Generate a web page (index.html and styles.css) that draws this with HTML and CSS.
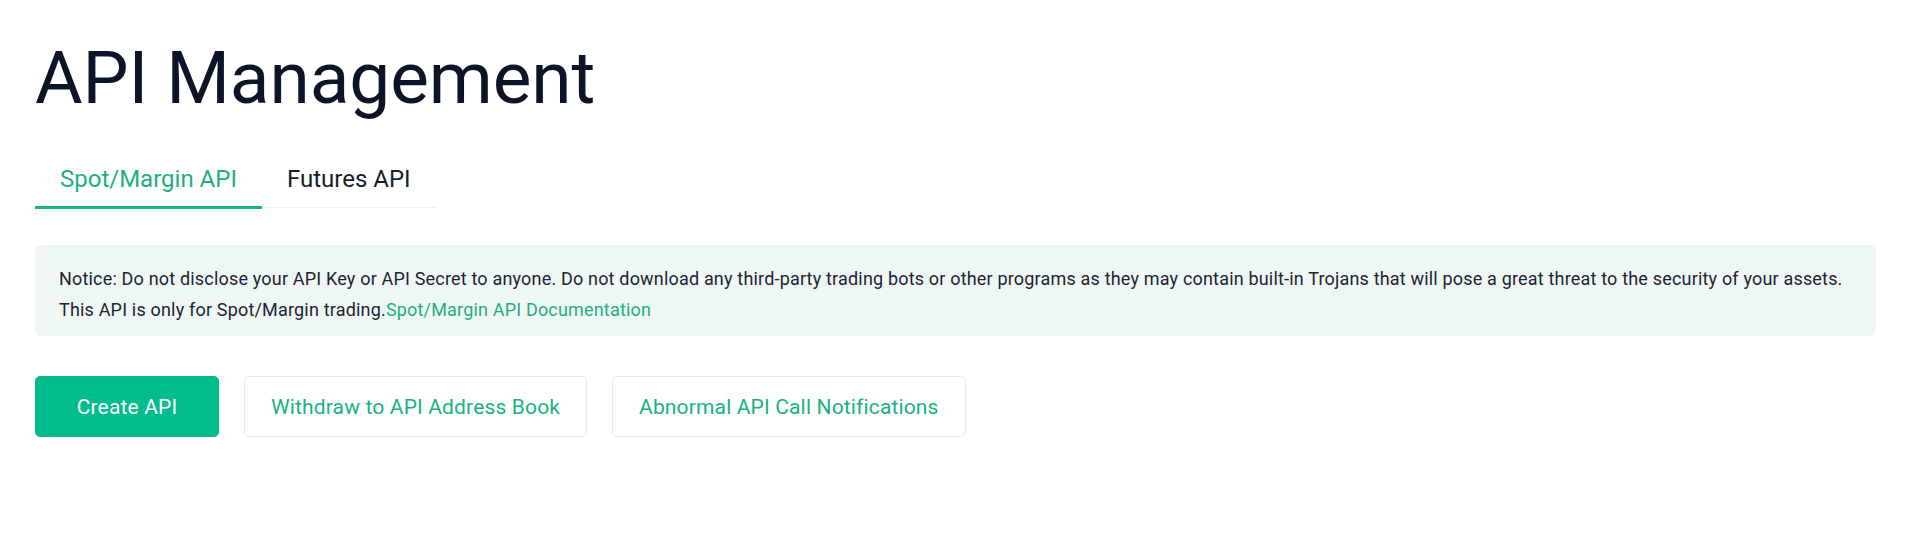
FILE: index.html
```html
<!DOCTYPE html>
<html lang="en">
<head>
<meta charset="utf-8">
<title>API Management</title>
<link rel="stylesheet" href="styles.css">
</head>
<body>
<main class="page">
  <h1 class="title">API Management</h1>
  <nav class="tabs">
    <a class="tab tab-active">Spot/Margin API</a>
    <a class="tab">Futures API</a>
  </nav>
  <div class="notice">
    <p class="notice-text">Notice: Do not disclose your API Key or API Secret to anyone. Do not download any third-party trading bots or other programs as they may contain built-in Trojans that will pose a great threat to the security of your assets.</p>
    <p class="notice-text">This API is only for Spot/Margin trading.<a class="notice-link">Spot/Margin API Documentation</a></p>
  </div>
  <div class="actions">
    <button class="btn btn-primary">Create API</button>
    <button class="btn btn-outline">Withdraw to API Address Book</button>
    <button class="btn btn-outline">Abnormal API Call Notifications</button>
  </div>
</main>
</body>
</html>
```
FILE: styles.css
```css
html, body {
  margin: 0;
  padding: 0;
  background: #ffffff;
}
body {
  font-family: Roboto, "Liberation Sans", sans-serif;
  color: #0c1628;
}
.page {
  padding: 38px 44px 0 35px;
  display: flex;
  flex-direction: column;
  align-items: flex-start;
}
.title {
  margin: 0;
  font-size: 73px;
  line-height: 80px;
  font-weight: 400;
  color: #0b1527;
  letter-spacing: -0.1px;
}
.tabs {
  margin-top: 45px;
  display: flex;
  border-bottom: 1px solid #edf1f1;
}
.tab {
  padding: 0 25px 11px;
  font-size: 24px;
  line-height: 32px;
  color: #161d2b;
  border-bottom: 3px solid transparent;
  margin-bottom: -2px;
  cursor: pointer;
}
.tab-active {
  color: #1fae84;
  border-bottom-color: #19b388;
}
.notice {
  align-self: stretch;
  margin-top: 37px;
  padding: 18px 20px 11px 24px;
  background: #eff7f4;
  border-radius: 6px;
}
.notice-text {
  margin: 0;
  font-size: 18px;
  line-height: 31px;
  letter-spacing: 0.18px;
  color: #1d2433;
}
.notice-link {
  color: #1fae84;
  cursor: pointer;
}
.actions {
  margin-top: 40px;
  display: flex;
  gap: 25px;
}
.btn {
  height: 61px;
  padding: 0 26px;
  font-family: Roboto, "Liberation Sans", sans-serif;
  font-size: 21px;
  letter-spacing: 0.15px;
  border-radius: 5px;
  cursor: pointer;
}
.btn-primary {
  min-width: 184px;
  background: #01bc8d;
  border: 1px solid #01b789;
  color: #ffffff;
}
.btn-outline {
  background: #ffffff;
  border: 1px solid #e6eaea;
  color: #17b384;
}
```
